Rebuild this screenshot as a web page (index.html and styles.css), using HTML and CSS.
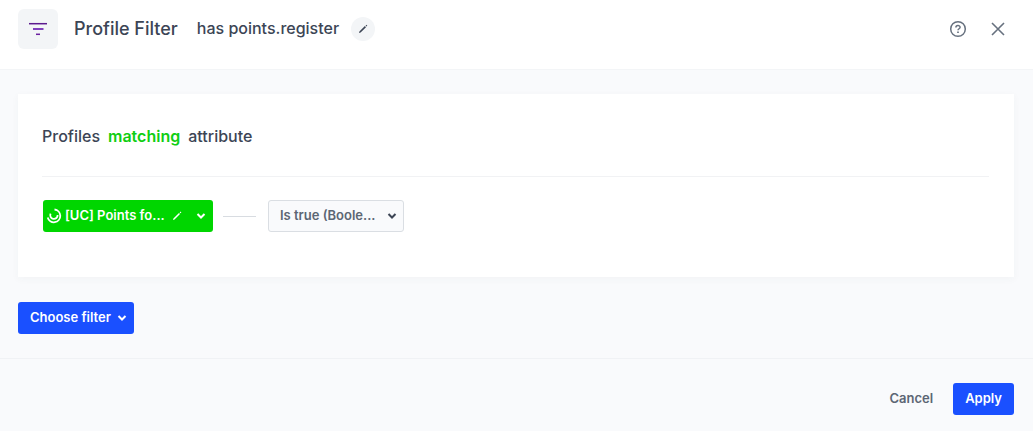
FILE: index.html
```html
<!DOCTYPE html>
<html lang="en">
<head>
<meta charset="utf-8">
<meta name="viewport" content="width=device-width, initial-scale=1">
<title>Profile Filter</title>
<link rel="stylesheet" href="styles.css">
</head>
<body>
<div class="dialog">
  <header class="header">
    <span class="badge">
      <svg width="20" height="14" viewBox="0 0 20 14" fill="none" aria-hidden="true">
        <path d="M1 1.700h18" stroke="#5c1a8e" stroke-width="1.500"/><path d="M5 7h10.500" stroke="#8040bd" stroke-width="2"/><path d="M8 12.300h4" stroke="#6b21a0" stroke-width="1.500"/>
      </svg>
    </span>
    <h1 class="title">Profile Filter</h1>
    <span class="name">has points.register</span>
    <button class="edit" type="button" aria-label="Edit name">
      <svg width="10" height="10" viewBox="0 0 10 10" aria-hidden="true"><path d="M1 9l.4-1.600L6.900 2.100l1.100 1.100L2.600 8.600zM7.600 1.500l.7-.7 1 1-.7.700z" fill="currentColor"/></svg>
    </button>
    <div class="tools">
      <button class="tool" type="button" aria-label="Help">
        <svg width="18" height="18" viewBox="0 0 18 18" fill="none" stroke="currentColor" stroke-width="1.500" aria-hidden="true"><circle cx="9" cy="9" r="7.300"/><path d="M6.900 7.400C6.900 5 11.100 5 11.100 7.300c0 1.500-2.100 1.400-2.100 3"/><path d="M9 11.500v1.500" stroke-width="1.700"/></svg>
      </button>
      <button class="tool" type="button" aria-label="Close">
        <svg width="18" height="18" viewBox="0 0 18 18" fill="none" stroke="currentColor" stroke-width="1.600" aria-hidden="true"><path d="M3 3l12 12M15 3L3 15"/></svg>
      </button>
    </div>
  </header>

  <main class="content">
    <section class="card">
      <h2 class="sentence"><span>Profiles</span><span class="match">matching</span><span>attribute</span></h2>
      <div class="rule">
        <div class="picker picker-green">
          <svg class="spinner" width="16" height="16" viewBox="0 0 16 16" fill="none" stroke="currentColor" stroke-width="1.800" aria-hidden="true"><path d="M8.500 1.500A6.400 6.400 0 1 1 1.700 9.500"/><path d="M4.600 5.600A3.700 3.700 0 1 0 11.600 7"/></svg>
          <select class="select" aria-label="Attribute"><option>[UC] Points fo...</option></select>
          <button class="pen" type="button" aria-label="Edit attribute">
            <svg width="10" height="10" viewBox="0 0 10 10" aria-hidden="true"><path d="M1 9l.4-1.500L7 2l1 1L2.500 8.600zM7.700 1.400l.8-.8.900.9-.8.800z" fill="currentColor"/></svg>
          </button>
          <svg class="chevron" width="10" height="8" viewBox="0 0 10 8" fill="none" stroke="currentColor" stroke-width="2" aria-hidden="true"><path d="M1.500 2L5 5.500 8.500 2"/></svg>
        </div>
        <span class="link-line"></span>
        <div class="picker picker-plain">
          <select class="select" aria-label="Condition"><option>Is true (Boole...</option></select>
          <svg class="chevron" width="10" height="8" viewBox="0 0 10 8" fill="none" stroke="currentColor" stroke-width="2" aria-hidden="true"><path d="M1.500 2L5 5.500 8.500 2"/></svg>
        </div>
      </div>
    </section>
    <button class="button choose" type="button" aria-haspopup="menu">Choose filter
      <svg width="10" height="10" viewBox="0 0 10 10" fill="none" stroke="currentColor" stroke-width="2" aria-hidden="true"><path d="M1.500 4L5 7.500 8.500 4"/></svg>
    </button>
  </main>

  <footer class="footer">
    <button class="button cancel" type="button">Cancel</button>
    <button class="button" type="button">Apply</button>
  </footer>
</div>
</body>
</html>
```
FILE: styles.css
```css
* { box-sizing: border-box; }
body {
  margin: 0;
  background: #f9fafc;
  color: #3c4555;
  font: 600 13px/20px Inter, "Liberation Sans", sans-serif;
}
button, select {
  margin: 0;
  padding: 0;
  border: 0;
  background: none;
  color: inherit;
  font: inherit;
  cursor: pointer;
}
h1, h2 { margin: 0; font-weight: 500; }
svg { display: block; flex: none; }
.dialog { min-height: 100vh; display: flex; flex-direction: column; }
.header {
  display: flex;
  align-items: center;
  padding: 9px 26px 20px 18px;
  background: #fff;
  border-bottom: 1px solid #f3f5f7;
}
.badge {
  display: grid;
  place-items: center;
  width: 40px;
  height: 40px;
  margin-right: 16px;
  border-radius: 6px;
  background: #f3f5f7;
}
.title { font-size: 18px; line-height: 24px; margin-right: 19px; }
.name { font-size: 16px; line-height: 24px; font-weight: 500; margin-right: 12px; padding-bottom: 2px; }
.edit {
  display: grid;
  place-items: center;
  width: 24px;
  height: 24px;
  border-radius: 50%;
  background: #f3f5f7;
}
.tools { display: flex; gap: 22px; margin-left: auto; color: #67717f; }
.content { flex: 1; padding: 24px 19px 24px 18px; }
.card {
  margin-bottom: 25px;
  padding: 30px 25px 45px 24px;
  background: #fff;
  box-shadow: 0 2px 8px #3c45550a;
}
.sentence {
  display: flex;
  gap: 8px;
  padding-bottom: 28px;
  margin-bottom: 23px;
  border-bottom: 1px solid #f1f2f4;
  font-size: 16px;
  line-height: 24px;
}
.match { color: #0fce13; font-weight: 600; }
.rule { display: flex; align-items: center; }
.picker {
  display: flex;
  align-items: center;
  height: 32px;
  margin-left: 1px;
  border-radius: 3px;
}
.picker-green { width: 170px; padding: 0 7px 0 3px; background: #00d600; color: #fff; }
.picker-plain { width: 136px; padding: 0 6px 0 11px; border: 1px solid #dadee3; background: #f9fafc; color: #5c6674; }
.spinner { margin-right: 3px; }
.select { flex: 1; min-width: 0; height: 30px; padding-bottom: 2px; appearance: none; }
.picker-plain .chevron { color: #3c4555; }
.pen { margin-right: 14px; }
.link-line { width: 33px; height: 1px; margin: 0 11px 0 10px; background: #d8dce1; }
.button {
  display: inline-flex;
  align-items: center;
  height: 32px;
  padding: 0 12px 2px;
  border-radius: 3px;
  background: #1a50ff;
  color: #fff;
}
.choose { gap: 6px; padding-right: 7px; }
.footer {
  display: flex;
  justify-content: flex-end;
  gap: 8px;
  padding: 24px 19px 16px;
  border-top: 1px solid #f0f2f5;
}
.cancel { background: none; color: #5c6674; }
```
